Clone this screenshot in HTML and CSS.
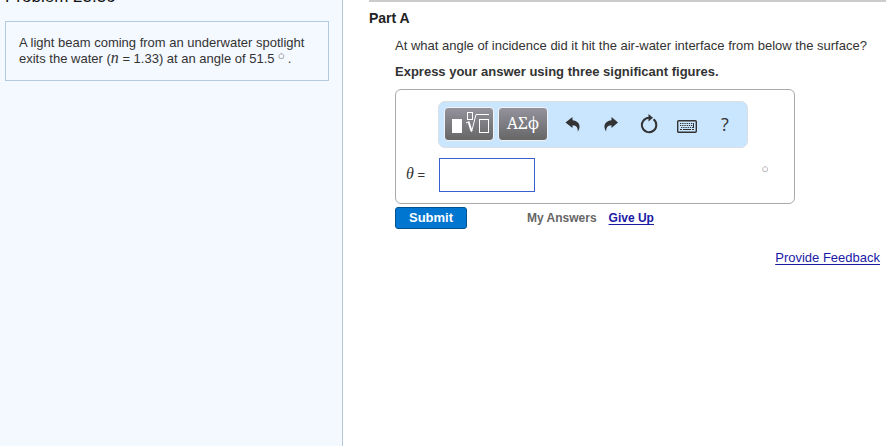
FILE: index.html
```html
<!DOCTYPE html>
<html lang="en">
<head>
  <meta charset="UTF-8">
  <meta name="viewport" content="width=device-width, initial-scale=1.0">
  <title>Problem 23.36</title>
  <link rel="stylesheet" href="styles.css">
</head>
<body>
  <aside class="sidebar">
    <h1 class="problem-title">Problem 23.36</h1>
    <div class="problem-text">
      A light beam coming from an underwater spotlight exits the water (<i class="math">n</i> = 1.33) at an angle of 51.5 <span class="degree">○</span> .
    </div>
  </aside>

  <main class="content">
    <h2 class="part-title">Part A</h2>
    <div class="part">
      <p class="question">At what angle of incidence did it hit the air-water interface from below the surface?</p>
      <p class="instructions">Express your answer using three significant figures.</p>

      <form class="answer-form" onsubmit="return false">
        <div class="answer-box">
          <div class="toolbar">
            <div class="palettes">
              <button type="button" class="palette" aria-label="Templates">
                <svg width="42" height="26" viewBox="0 0 42 26" fill="none" stroke="#fff">
                  <rect x="4" y="9" width="10" height="14" fill="#fff" stroke="none"/>
                  <rect x="19.500" y="2.500" width="5" height="7"/>
                  <path d="M18 13l2.500-1.200"/>
                  <path d="M20.500 11.500l3 9.500" stroke-width="2"/>
                  <path d="M23.500 22l4.500-17.500H41"/>
                  <rect x="31.500" y="9.500" width="9" height="13"/>
                </svg>
              </button>
              <button type="button" class="palette">ΑΣϕ</button>
            </div>
            <button type="button" class="tool" aria-label="Undo">
              <svg width="16" height="18" viewBox="0 0 16 18" fill="#333">
                <path d="M.5 7.500L7.500 2v3.200c4.500.3 7.500 3.300 7 7.300-.2 1.500-.8 2.900-1.700 4 .2-3.700-1.300-6-5.300-6.200V13z"/>
              </svg>
            </button>
            <button type="button" class="tool" aria-label="Redo">
              <svg width="16" height="18" viewBox="0 0 16 18" fill="#333">
                <path d="M15 7.500L8.500 2v3.200c-4.500.3-7.500 3.300-7 7.300.2 1.500.8 2.900 1.700 4-.2-3.700 1.300-6 5.300-6.200V13z"/>
              </svg>
            </button>
            <button type="button" class="tool" aria-label="Reset">
              <svg width="18" height="20" viewBox="0 0 18 20">
                <path d="M13.500 5.300A7.200 7.200 0 1 1 9 3.800" fill="none" stroke="#333" stroke-width="2"/>
                <path d="M8.500 0l4.500 3.800-4.500 3.700z" fill="#333"/>
              </svg>
            </button>
            <button type="button" class="tool" aria-label="Keyboard shortcuts">
              <svg class="keyboard" width="20" height="13" viewBox="0 0 20 13" fill="none" stroke="#333">
                <rect x=".7" y=".7" width="18.600" height="11.600" rx="1" stroke-width="1.400"/>
                <path d="M3 3.500h14M3 5.500h14M4 7.500h13" stroke-dasharray="1.300 .9"/>
                <path d="M16.500 3v5M3 9.500h2M6 9.500h8M15 9.500h2"/>
              </svg>
            </button>
            <button type="button" class="tool help" aria-label="Help">?</button>
          </div>
          <div class="answer-row">
            <label class="answer-label" for="theta"><i class="math">θ</i> =</label>
            <input type="text" id="theta" class="answer-input">
            <span class="degree unit">○</span>
          </div>
        </div>
        <div class="actions">
          <button type="submit" class="submit">Submit</button>
          <span class="my-answers">My Answers</span>
          <a class="link" href="#">Give Up</a>
        </div>
      </form>
    </div>
    <div class="footer">
      <a class="link" href="#">Provide Feedback</a>
    </div>
  </main>
</body>
</html>
```
FILE: styles.css
```css
body {
  display: flex;
  min-height: 100vh;
  margin: 0;
  overflow: hidden;
  background: #fff;
  color: #333;
  font-family: Arial, "Liberation Sans", sans-serif;
  font-size: 13px;
  line-height: 16px;
}

/* Problem statement */
.sidebar {
  flex: 0 0 343px;
  box-sizing: border-box;
  padding: 0 13px 0 5px;
  border-right: 1px solid #b3cade;
  background: #f4f8ff;
}

.problem-title {
  margin: -11px 0 16px;
  color: #111;
  font-size: 17px;
  font-weight: normal;
  line-height: 16px;
}

.problem-text {
  padding: 13px;
  border: 1px solid #b3cade;
}

.math {
  font-family: "Liberation Serif", serif;
  font-size: 16px;
  line-height: 10px;
}

.degree {
  font-family: "DejaVu Sans", sans-serif;
  font-size: 7px;
  line-height: 7px;
  vertical-align: 5px;
}

/* Question */
.content {
  flex: 1;
  margin-left: 26px;
}

.part-title {
  margin: 0;
  padding-top: 8px;
  border-top: 2px solid #ccc;
  color: #222;
  font-size: 14px;
  line-height: 16px;
}

.part {
  padding: 12px 6px 0 26px;
}

.question {
  margin: 0 0 10px;
}

.instructions {
  margin: 0 0 9px;
  font-weight: bold;
}

.answer-box {
  box-sizing: border-box;
  max-width: 400px;
  padding: 11px 26px 11px 10px;
  border: 1px solid #aaa;
  border-radius: 6px;
}

.toolbar {
  display: flex;
  align-items: center;
  gap: 4px;
  box-sizing: border-box;
  max-width: 310px;
  height: 47px;
  margin-left: 32px;
  padding: 0 5px 1px;
  border: 1px solid #d8dfe5;
  border-radius: 7px;
  background: #cae6ff;
}

.palettes {
  display: flex;
  gap: 4px;
  margin-right: 4px;
}

.palette {
  width: 50px;
  height: 34px;
  padding: 0 0 2px;
  border: 1px solid #f2f2f5;
  border-radius: 4px;
  background: linear-gradient(#94929c, #666);
  color: #fff;
  font-family: "Noto Serif", "DejaVu Serif", "Liberation Serif", serif;
  font-size: 16px;
}

.palette svg {
  display: block;
  margin: 0 auto;
}

.tool {
  display: flex;
  align-items: center;
  justify-content: center;
  flex: 1 1 0;
  height: 34px;
  padding: 0;
  border: 0;
  background: none;
  color: #333;
}

.keyboard {
  margin-top: 4px;
}

.help {
  font-family: "Open Sans", sans-serif;
  font-size: 18px;
}

.answer-row {
  display: flex;
  align-items: center;
  margin-top: 10px;
}

.answer-label {
  width: 33px;
}

.answer-input {
  box-sizing: border-box;
  width: 96px;
  height: 34px;
  border: 1px solid #3b5fcf;
  font-size: 14px;
}

.unit {
  margin: 0 0 12px auto;
  color: #555;
}

.actions {
  display: flex;
  align-items: center;
  margin-top: 3px;
  font-size: 12px;
  font-weight: bold;
}

.submit {
  width: 72px;
  height: 22px;
  padding: 0 0 2px;
  border: 1px solid #00528f;
  border-radius: 3px;
  background: #0076d1;
  color: #fff;
  font-family: inherit;
  font-size: 13px;
  font-weight: bold;
}

.my-answers {
  margin: 0 12px 0 60px;
  color: #666;
}

.link {
  color: #1a1aa6;
  text-underline-offset: 2px;
}

.footer {
  padding: 21px 6px 0 0;
  text-align: right;
}
```
